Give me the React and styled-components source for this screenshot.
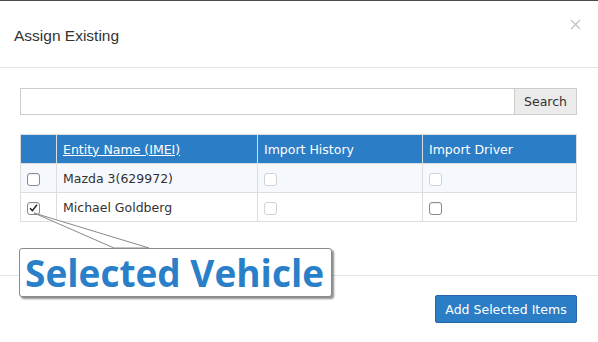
import React from 'react';
import styled, { createGlobalStyle } from 'styled-components';

const GlobalStyle = createGlobalStyle`
  html, body {
    margin: 0;
    padding: 0;
    background: #fff;
  }
  body {
    border-top: 1px solid #4a4a4a;
  }
`;

const rows = [
    { id: 1, name: 'Mazda 3(629972)', selected: false, driverEnabled: false },
    { id: 2, name: 'Michael Goldberg', selected: true, driverEnabled: true },
];

function Box({ checked, disabled }) {
    return (
        <CheckBox $disabled={disabled}>
            {checked && (
                <svg width="9" height="8" viewBox="0 0 9 8">
                    <path d="M1 4.2 L3.4 6.6 L8 0.8" fill="none" stroke="#222" strokeWidth="1.5" />
                </svg>
            )}
        </CheckBox>
    );
}

function App() {
    return (
        <>
            <GlobalStyle />
            <Modal>
                <Header>
                    <Title>Assign Existing</Title>
                    <Close>
                        <svg width="11" height="11" viewBox="0 0 11 11">
                            <path d="M1 1 L10 10 M10 1 L1 10" stroke="#c4c4c4" strokeWidth="1.4" />
                        </svg>
                    </Close>
                </Header>
                <Body>
                    <SearchRow>
                        <SearchInput />
                        <SearchButton>Search</SearchButton>
                    </SearchRow>
                    <Table>
                        <thead>
                            <tr>
                                <Th $w={36}></Th>
                                <Th $w={201}><HeadLink>Entity Name (IMEI)</HeadLink></Th>
                                <Th $w={165}>Import History</Th>
                                <Th>Import Driver</Th>
                            </tr>
                        </thead>
                        <tbody>
                            {rows.map((row, i) => (
                                <Tr key={row.id} $striped={i % 2 === 0}>
                                    <Td><Box checked={row.selected} /></Td>
                                    <Td>{row.name}</Td>
                                    <Td><Box disabled /></Td>
                                    <Td><Box disabled={!row.driverEnabled} /></Td>
                                </Tr>
                            ))}
                        </tbody>
                    </Table>
                    <Callout>
                        <Pointer width="140" height="40" viewBox="0 0 140 40">
                            <path d="M2 2 L82 37 L117 37 Z" fill="#fff" stroke="#8a8a8a" strokeWidth="1" />
                        </Pointer>
                        <CalloutBox>Selected Vehicle</CalloutBox>
                    </Callout>
                </Body>
                <Footer>
                    <PrimaryButton>Add Selected Items</PrimaryButton>
                </Footer>
            </Modal>
        </>
    );
}

export default App;

const Modal = styled.div`
  width: 598px;
  height: 341px;
  background: #fff;
  display: flex;
  flex-direction: column;
  font-family: "DejaVu Sans", sans-serif;
  color: #333;
`

const Header = styled.div`
  height: 67px;
  border-bottom: 1px solid #e5e5e5;
  display: flex;
  align-items: flex-start;
  justify-content: space-between;
  padding: 0 17px 0 14px;
  box-sizing: border-box;
`

const Title = styled.h4`
  margin: 26px 0 0;
  font-family: "Liberation Sans", Arial, sans-serif;
  font-weight: normal;
  font-size: 15.5px;
  color: #333;
`

const Close = styled.span`
  margin-top: 18px;
  display: flex;
`

const Body = styled.div`
  position: relative;
  padding: 20px 21px 0 20px;
  height: 207px;
  box-sizing: border-box;
`

const SearchRow = styled.div`
  display: flex;
  height: 27px;
`

const SearchInput = styled.input`
  flex: 1;
  border: 1px solid #ccc;
  border-right: none;
  box-sizing: border-box;
  height: 27px;
  margin: 0;
  outline: none;
`

const SearchButton = styled.button`
  width: 63px;
  height: 27px;
  border: 1px solid #ccc;
  background: #ebebeb;
  font-family: "DejaVu Sans", sans-serif;
  font-size: 12.5px;
  color: #333;
  padding: 0;
  margin: 0;
`

const Table = styled.table`
  margin-top: 19px;
  width: 557px;
  border-collapse: collapse;
  font-size: 12.5px;
  border: 1px solid #ddd;
`

const Th = styled.th`
  width: ${p => (p.$w ? `${p.$w}px` : 'auto')};
  height: 29px;
  background: #2b7dc6;
  color: #fff;
  font-weight: normal;
  text-align: left;
  padding: 0 6px;
  box-sizing: border-box;
  border: 1px solid #ddd;
  border-top: none;
  border-bottom: none;
`

const HeadLink = styled.span`
  text-decoration: underline;
`

const Tr = styled.tr`
  background: ${p => (p.$striped ? '#f5f9fe' : '#fff')};
`

const Td = styled.td`
  height: 29px;
  padding: 0 6px;
  box-sizing: border-box;
  border: 1px solid #ddd;
  color: #333;
`

const CheckBox = styled.span`
  width: 11px;
  height: 11px;
  border: 1px solid ${p => (p.$disabled ? '#d2d2d2' : '#8a8a8a')};
  border-radius: 3px;
  background: #fff;
  display: flex;
  align-items: center;
  justify-content: center;
  margin-top: 2px;
  box-shadow: ${p => (p.$disabled ? 'none' : 'inset 0 1px 1px rgba(0,0,0,0.08)')};
`

const Callout = styled.div`
  position: absolute;
  left: 19px;
  top: 180px;
  z-index: 2;
`

const Pointer = styled.svg`
  position: absolute;
  left: 13px;
  top: -37px;
  overflow: visible;
  z-index: 1;
`

const CalloutBox = styled.div`
  position: relative;
  width: 313px;
  height: 49px;
  box-sizing: border-box;
  border: 1px solid #8a8a8a;
  border-radius: 3px;
  background: #fff;
  box-shadow: 2px 2px 2px rgba(0, 0, 0, 0.45);
  color: #2a7fc9;
  font-family: "Open Sans", sans-serif;
  font-weight: bold;
  font-size: 37px;
  line-height: 47px;
  padding-left: 5px;
  white-space: nowrap;
`

const Footer = styled.div`
  border-top: 1px solid #e5e5e5;
  flex: 1;
  display: flex;
  justify-content: flex-end;
  align-items: flex-start;
  padding: 19px 21px 0 0;
`

const PrimaryButton = styled.button`
  width: 142px;
  height: 28px;
  background: #2b7dc6;
  border: 1px solid #2668a8;
  border-radius: 2px;
  color: #fff;
  font-family: "DejaVu Sans", sans-serif;
  font-size: 12.5px;
  padding: 0;
`
